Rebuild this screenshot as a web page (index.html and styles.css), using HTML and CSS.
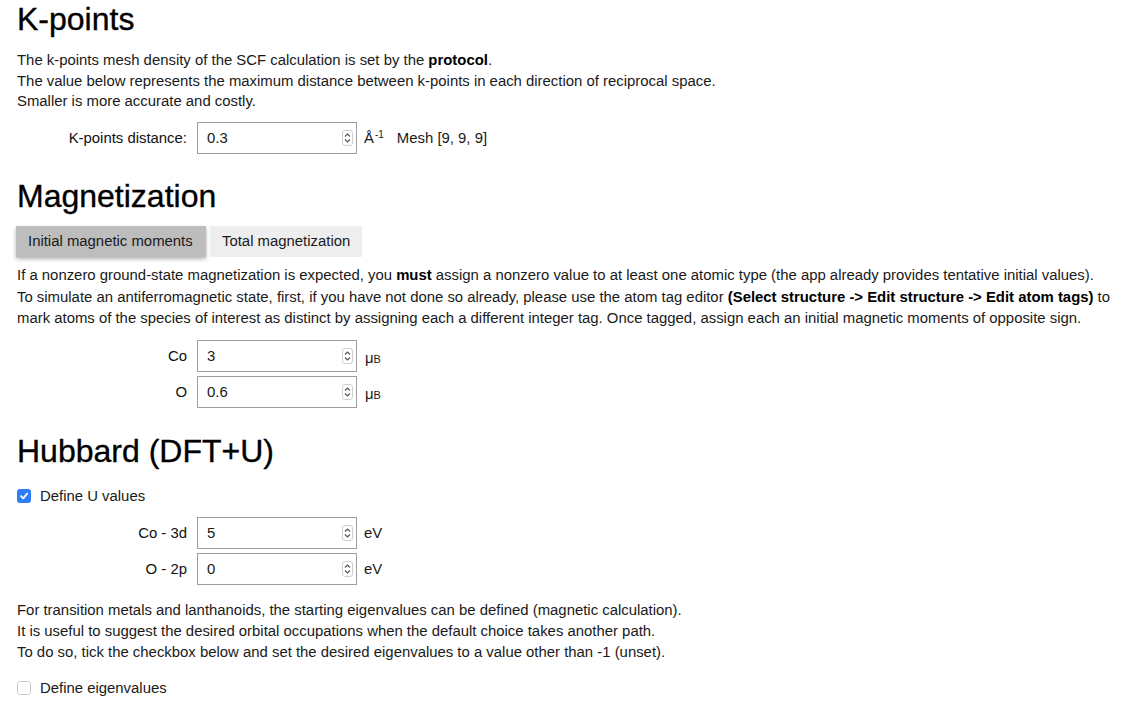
FILE: index.html
```html
<!DOCTYPE html>
<html>
<head>
<meta charset="utf-8">
<link rel="stylesheet" href="styles.css">
</head>
<body>
<div class="page">
  <h1 class="title">K-points</h1>
  <p class="text text-k">The k-points mesh density of the SCF calculation is set by the <b>protocol</b>.<br>The value below represents the maximum distance between k-points in each direction of reciprocal space.<br>Smaller is more accurate and costly.</p>
  <div class="row row-k">
    <label class="desc">K-points distance:</label>
    <div class="num"><span class="val">0.3</span><span class="spin"><svg width="9" height="14" viewBox="0 0 9 14"><path d="M2 5.5 L4.5 3 L7 5.5 M2 8.5 L4.5 11 L7 8.5" fill="none" stroke="#555" stroke-width="1.2"/></svg></span></div>
    <span class="unit">Å<sup>-1</sup></span>
    <span class="mesh">Mesh [9, 9, 9]</span>
  </div>

  <h1 class="title title-mag">Magnetization</h1>
  <div class="tabs">
    <div class="tab tab-active">Initial magnetic moments</div>
    <div class="tab">Total magnetization</div>
  </div>
  <p class="text text-mag">If a nonzero ground-state magnetization is expected, you <b>must</b> assign a nonzero value to at least one atomic type (the app already provides tentative initial values).<br>To simulate an antiferromagnetic state, first, if you have not done so already, please use the atom tag editor <b>(Select structure -&gt; Edit structure -&gt; Edit atom tags)</b> to<br>mark atoms of the species of interest as distinct by assigning each a different integer tag. Once tagged, assign each an initial magnetic moments of opposite sign.</p>
  <div class="rows rows-mag">
    <div class="row">
      <label class="desc">Co</label>
      <div class="num"><span class="val">3</span><span class="spin"><svg width="9" height="14" viewBox="0 0 9 14"><path d="M2 5.5 L4.5 3 L7 5.5 M2 8.5 L4.5 11 L7 8.5" fill="none" stroke="#555" stroke-width="1.2"/></svg></span></div>
      <span class="unit unit-mu">μ<sub>B</sub></span>
    </div>
    <div class="row">
      <label class="desc">O</label>
      <div class="num"><span class="val">0.6</span><span class="spin"><svg width="9" height="14" viewBox="0 0 9 14"><path d="M2 5.5 L4.5 3 L7 5.5 M2 8.5 L4.5 11 L7 8.5" fill="none" stroke="#555" stroke-width="1.2"/></svg></span></div>
      <span class="unit unit-mu">μ<sub>B</sub></span>
    </div>
  </div>

  <h1 class="title title-hub">Hubbard (DFT+U)</h1>
  <div class="check check-u">
    <span class="box box-on"><svg width="10" height="10" viewBox="0 0 10 10"><path d="M2 5.2 L4.2 7.4 L8.2 2.6" fill="none" stroke="#fff" stroke-width="1.8" stroke-linecap="round" stroke-linejoin="round"/></svg></span>
    <span>Define U values</span>
  </div>
  <div class="rows rows-hub">
    <div class="row">
      <label class="desc">Co - 3d</label>
      <div class="num"><span class="val">5</span><span class="spin"><svg width="9" height="14" viewBox="0 0 9 14"><path d="M2 5.5 L4.5 3 L7 5.5 M2 8.5 L4.5 11 L7 8.5" fill="none" stroke="#555" stroke-width="1.2"/></svg></span></div>
      <span class="unit">eV</span>
    </div>
    <div class="row">
      <label class="desc">O - 2p</label>
      <div class="num"><span class="val">0</span><span class="spin"><svg width="9" height="14" viewBox="0 0 9 14"><path d="M2 5.5 L4.5 3 L7 5.5 M2 8.5 L4.5 11 L7 8.5" fill="none" stroke="#555" stroke-width="1.2"/></svg></span></div>
      <span class="unit">eV</span>
    </div>
  </div>
  <p class="text text-hub">For transition metals and lanthanoids, the starting eigenvalues can be defined (magnetic calculation).<br>It is useful to suggest the desired orbital occupations when the default choice takes another path.<br>To do so, tick the checkbox below and set the desired eigenvalues to a value other than -1 (unset).</p>
  <div class="check check-eig">
    <span class="box box-off"></span>
    <span>Define eigenvalues</span>
  </div>
</div>
</body>
</html>
```
FILE: styles.css
```css
html, body {
  margin: 0;
  padding: 0;
  background: #ffffff;
}
body {
  font-family: "Liberation Sans", Arial, Helvetica, sans-serif;
  font-size: 14.9px;
  color: #1a1a1a;
}
.page {
  padding: 0 10px 0 17px;
  display: flex;
  flex-direction: column;
  width: 1119px;
}
.title {
  margin: 0;
  font-size: 32px;
  font-weight: normal;
  line-height: 38px;
  color: #000;
  -webkit-text-stroke: 0.35px #000;
  white-space: nowrap;
}
.title-mag { margin-top: 23px; }
.title-hub { margin-top: 24px; }
.text {
  margin: 0;
  white-space: nowrap;
}
.text b { color: #000; }
.text-k { margin-top: 12px; line-height: 20.7px; }
.text-mag { margin-top: 8px; line-height: 21.5px; }
.text-hub { margin-top: 15px; line-height: 21px; }

.row {
  display: flex;
  align-items: center;
  height: 32px;
}
.row-k { margin-top: 10px; }
.rows {
  display: flex;
  flex-direction: column;
  gap: 4px;
}
.rows-mag { margin-top: 10px; }
.rows-hub { margin-top: 10px; }
.desc {
  flex: 0 0 180px;
  width: 180px;
  text-align: right;
  padding-right: 10px;
  box-sizing: border-box;
  color: #111;
}
.num {
  flex: 0 0 160px;
  width: 160px;
  height: 32px;
  box-sizing: border-box;
  border: 1px solid #9e9e9e;
  display: flex;
  align-items: center;
  justify-content: space-between;
  padding: 0 3px 0 9px;
  background: #fff;
}
.spin {
  display: flex;
  align-items: center;
  justify-content: center;
  width: 11px;
  height: 16px;
  border: 1px solid #cfcfcf;
  border-radius: 3px;
  box-sizing: border-box;
}
.unit {
  margin-left: 7px;
}
.unit sup {
  font-size: 10px;
  vertical-align: 0;
  position: relative;
  top: -5px;
  margin-left: 1px;
}
.unit-mu { margin-left: 8px; position: relative; top: 2px; }
.unit-mu sub {
  font-size: 11px;
  vertical-align: 0;
}
.mesh {
  margin-left: 13px;
}

.tabs {
  display: flex;
  gap: 4px;
  margin-top: 11px;
  margin-left: -1px;
}
.tab {
  height: 31px;
  line-height: 31px;
  padding: 0 12px;
  background: #eeeeee;
  color: #1a1a1a;
}
.tab-active {
  background: #bdbdbd;
  box-shadow: 0 2px 4px rgba(0, 0, 0, 0.3);
  width: 190px;
  box-sizing: border-box;
}

.check {
  display: flex;
  align-items: center;
  height: 21px;
  gap: 9px;
}
.check-u { margin-top: 16px; }
.check-eig { margin-top: 15px; }
.box {
  width: 14px;
  height: 14px;
  box-sizing: border-box;
  border-radius: 3px;
  display: flex;
  align-items: center;
  justify-content: center;
}
.box-on { background: #2f7df6; }
.box-off { border: 1px solid #cccccc; background: #fff; }
```
